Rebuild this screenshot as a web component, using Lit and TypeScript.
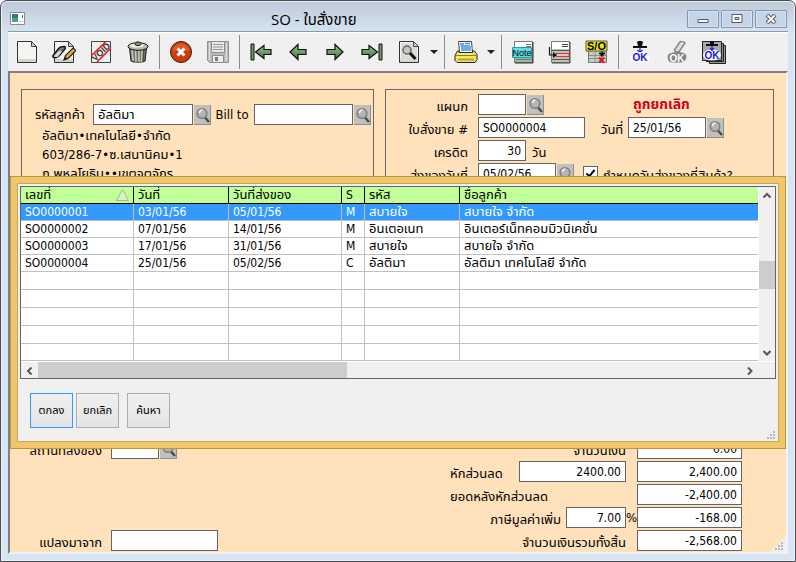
import { LitElement, html, svg, css, nothing, type TemplateResult } from "lit";
import { customElement, property, state } from "lit/decorators.js";
import { classMap } from "lit/directives/class-map.js";

const sheet = svg`<path d="M2.500 1.500h14l5 5v16h-19z" fill="#f4f4f0" stroke="#333"/><path d="M3 19h18v3H3z" fill="#d4d4cc"/><path d="M16.500 1.500v5h5z" fill="#d0d0c8" stroke="#444"/>`;

const arrowRight = svg`<path d="M4 9.500h8v-5l8 7.500-8 7.500v-5H4z" fill="url(#green)" stroke="#111" stroke-width="1.200"/>`;
const arrowLeft = svg`<path d="M20 9.500h-8v-5L4 12l8 7.500v-5h8z" fill="url(#green)" stroke="#111" stroke-width="1.200"/>`;
const green = svg`<defs><linearGradient id="green" x1="0" y1="0" x2="0" y2="1"><stop offset="0" stop-color="#a9cba0"/><stop offset="0.500" stop-color="#6c9a69"/><stop offset="1" stop-color="#4a744a"/></linearGradient></defs>`;

const icons: Record<string, TemplateResult> = {
  new: sheet,
  edit: svg`${sheet}<path d="M1 15.500l6-7.500c1-1.300 2-1.500 5-1.500 1.500 0 1.800 1.500 1 2.500l-6 7c-1 1.500-5 2-5.500 1.500-.8-.4-1-1.200-.5-2z" fill="#777" stroke="#111" stroke-width="1.300"/><path d="M2 16l4.500-5c1.500-.5 3-.3 3.500.7l-4 4.800c-1 .8-3 1-4-.5z" fill="#d8d8d8"/><path d="M12 20l1.500-4.500L21 8l3 2.500-8 8z" fill="#e3ac2d" stroke="#222" stroke-width="1.200"/><path d="M11.500 20.500l2-4 2 2z" fill="#222"/>`,
  void: svg`<path d="M2.500 1.500h19v21h-19z" fill="#f0f0ee" stroke="#444"/><path d="M2.500 15.500L17 1.500M8 22L21.500 8.500" stroke="#f01820" stroke-width="1.600"/><text class="void-text" x="0" y="3" text-anchor="middle" transform="translate(12 12) rotate(-44)">VOID</text>`,
  trash: svg`<path d="M3.500 8h17l-1.500 13c-.5 1.500-13.500 1.500-14 0z" fill="#77786a" stroke="#191919"/><path d="M6 9l1 12M9.500 10l.5 12M13 10v12M16 10l-.5 12" stroke="#c8c9ba" stroke-width="1.500"/><path d="M18 9l-1 12" stroke="#44453d"/><ellipse cx="12" cy="6.500" rx="10" ry="3.800" fill="#b9baad" stroke="#191919"/><ellipse cx="11" cy="5.500" rx="7" ry="2" fill="#eeeee6"/><path d="M9 4.500c0-3.500 6-3.500 6 0-1 1.500-5 1.500-6 0z" fill="#8b8c80" stroke="#191919"/>`,
  cancel: svg`<circle cx="12" cy="12" r="10.500" fill="#cf3c0c" stroke="#3a1a12"/><path d="M3.500 12a8.500 8.500 0 0 1 17 0c-4-3-13-3-17 0z" fill="#dc5a28"/><path d="M8.500 8.500l7 7M15.500 8.500l-7 7" stroke="#fff" stroke-width="3"/>`,
  save: svg`<path d="M1.500 1.500h21v21h-19l-2-2z" fill="#bcbcbc" stroke="#919191"/><path d="M5.500 1.500h13v11h-13z" fill="#e8e8e8" stroke="#8c8c8c"/><path d="M7 4.500h10M7 7h10M7 9.500h10" stroke="#999"/><path d="M6.500 15.500h11v7h-11z" fill="#ececec" stroke="#8c8c8c"/><path d="M9 17h3v4H9z" fill="#7c7c7c"/><path d="M3.500 3v17M20.500 3v18" stroke="#dedede"/>`,
  first: svg`${green}<path d="M2 4h3v16H2z" fill="#6f9d6b" stroke="#111"/><path d="M22 9.500h-7v-4L6.500 12l8.500 6.500v-4h7z" fill="url(#green)" stroke="#111" stroke-width="1.200"/>`,
  previous: svg`${green}${arrowLeft}`,
  next: svg`${green}${arrowRight}`,
  last: svg`${green}<path d="M19 4h3v16h-3z" fill="#6f9d6b" stroke="#111"/><path d="M2 9.500h7v-4l8.500 6.500L9 18.500v-4H2z" fill="url(#green)" stroke="#111" stroke-width="1.200"/>`,
  find: svg`${sheet}<path d="M4 3h12v4h4v14H4z" fill="#dcdcd6"/><circle cx="10" cy="10" r="4" fill="#c6c8c2" stroke="#666" stroke-width="1.500"/><path d="M13 13l5.500 6" stroke="#111" stroke-width="3"/>`,
  print: svg`<path d="M4.500 1.500h13l1 11h-13z" fill="#fff" stroke="#444"/><path d="M6 4h4M11 3.500h5M6.500 6h10M7 8h10M7 10h10" stroke="#3d93e0" stroke-width="1.500"/><path d="M3.500 11L1 15.500v5l2 2h18l2-3v-5L20.500 11h-2v1.500H5V11z" fill="#f1e36b" stroke="#222"/><path d="M1.500 15.500h21" stroke="#8c7f22"/><path d="M5 13.500h14" stroke="#fffbc8" stroke-dasharray="1 1"/><path d="M4 19.500h16" stroke="#b5a52d" stroke-width="2"/>`,
  note: svg`<path d="M3.500 1.500h18v21h-18z" fill="#fff" stroke="#777"/><path d="M4 12h17v10H4z" fill="#a4b5a4"/><path d="M22 2v21H4" fill="none" stroke="#333"/><path d="M15 4.500h5M15 6.500h5M5 19.500h16" stroke="#777"/><path d="M1.500 7.500h19v10h-19z" fill="#62dce0" stroke="#2a9aa0"/><text class="note-text" x="11" y="16" text-anchor="middle">Note</text>`,
  insert: svg`<path d="M3.500 1.500h18v21h-18z" fill="#fff" stroke="#777"/><path d="M4 9h17v13H4z" fill="#b8c3b6"/><path d="M22 2v21H4M14 4.500h6M14 6.500h6" fill="none" stroke="#444"/><path d="M4 10.500h17M4 19.500h17" stroke="#356a44"/><path d="M8 13.500h13v3H8z" fill="#e9c0c8" stroke="#e03040"/><path d="M1.500 7v8H6" fill="none" stroke="#111" stroke-width="1.200"/><path d="M5 12l4 3-4 3z" fill="#111"/>`,
  salesOrder: svg`<path d="M3.500 10.500h18v12h-18z" fill="#c5cbc5" stroke="#777"/><path d="M4 15.500h17M4 18.500h17M10 12v10M16 12v10" stroke="#8a918a"/><path d="M1 1h21v10H1z" fill="#f5e800" stroke="#555"/><text class="so-text" x="11.500" y="10" text-anchor="middle">S/O</text><path d="M17 11v3M14 13h6l-3 3.500z" stroke="#111" fill="#111"/><path d="M14 17.500l5 5M19 17.500l-5 5" stroke="#e80f16" stroke-width="2"/>`,
  approve: svg`<path d="M9 2c0-1.500 6-1.500 6 0l-1 4h5v2H5V6h5z" fill="#111"/><path d="M12 8v5M9.500 10l2.500 2.500L14.500 10" stroke="#1b1be0" stroke-width="1.200" fill="none"/><ellipse cx="12" cy="17.500" rx="10" ry="5.500" fill="#fff"/><text class="ok-text" x="12" y="21" text-anchor="middle">OK</text>`,
  unapprove: svg`<path d="M9.500 10l5-7.500c1-1.500 4.500-1 5.500.5l-5.500 8c-1 1.500-5 1-5-1z" fill="#dedede" stroke="#888" stroke-width="1.500"/><path d="M3 15c2-3.500 16-4.500 18 0 1.500 4-2 7.500-5 7.500H7c-4 0-5-4.500-4-7.500z" fill="#858585"/><text class="ok-text ok-gray" x="12" y="22" text-anchor="middle">OK</text>`,
  approveAll: svg`<path d="M7.500 5.500h16v18h-16z" fill="#999" stroke="#222"/><path d="M4.500 3.500h17v18h-17z" fill="#888" stroke="#222"/><path d="M.5 1.500h19v19H.5z" fill="#a8a8a8" stroke="#222"/><ellipse cx="10" cy="15" rx="9" ry="5.500" fill="#fff"/><path d="M8 1h4v3h4v2H4V4h4z" fill="#111"/><path d="M10 6v4M8 8l2 2.500L12 8" stroke="#1b1be0" stroke-width="1.200" fill="none"/><text class="ok-text" x="10" y="19" text-anchor="middle">OK</text>`,
};

type ToolItem = { icon: string; label: string; menu?: boolean };

const toolGroups: ToolItem[][] = [
  [
    { icon: "new", label: "New" },
    { icon: "edit", label: "Edit" },
    { icon: "void", label: "Void" },
    { icon: "trash", label: "Delete" },
  ],
  [
    { icon: "cancel", label: "Cancel" },
    { icon: "save", label: "Save" },
  ],
  [
    { icon: "first", label: "First record" },
    { icon: "previous", label: "Previous record" },
    { icon: "next", label: "Next record" },
    { icon: "last", label: "Last record" },
    { icon: "find", label: "Find", menu: true },
  ],
  [{ icon: "print", label: "Print", menu: true }],
  [
    { icon: "note", label: "Note" },
    { icon: "insert", label: "Insert line" },
    { icon: "salesOrder", label: "Close sales order" },
  ],
  [
    { icon: "approve", label: "Approve" },
    { icon: "unapprove", label: "Remove approval" },
    { icon: "approveAll", label: "Approve all" },
  ],
];

@customElement("so-toolbar")
export class SoToolbar extends LitElement {
  static styles = css`
    :host {
      display: flex;
      align-items: center;
      height: 38px;
      background: #f0f0f0;
      border-top: 1px solid #fff;
    }
    button {
      display: flex;
      align-items: center;
      justify-content: center;
      width: 37px;
      height: 34px;
      padding: 0;
      border: 0;
      background: none;
    }
    button.menu {
      width: 14px;
    }
    .separator {
      width: 1px;
      height: 34px;
      margin: 0 2px 0 3px;
      background: #8c8c8c;
    }
    .void-text,
    .note-text,
    .so-text,
    .ok-text {
      font-family: "Liberation Sans", sans-serif;
    }
    .void-text,
    .so-text,
    .ok-text {
      font-weight: bold;
    }
    .void-text,
    .note-text {
      font-size: 9px;
    }
    .void-text {
      fill: #333;
    }
    .so-text {
      font-size: 11px;
    }
    .ok-text {
      font-size: 10px;
      fill: #1414f0;
    }
    .ok-text.ok-gray {
      fill: #fff;
    }
  `;

  render() {
    return toolGroups.map(
      (group, i) => html`
        ${i > 0 ? html`<span class="separator"></span>` : nothing}
        ${group.map(
          (item) => html`
            <button aria-label=${item.label}>
              <svg width="24" height="24" viewBox="0 0 24 24">${icons[item.icon]}</svg>
            </button>
            ${item.menu
              ? html`<button class="menu" aria-label="${item.label} options">
                  <svg width="8" height="4" viewBox="0 0 8 4"><path d="M0 0h8L4 4z" fill="#222" /></svg>
                </button>`
              : nothing}
          `,
        )}
      `,
    );
  }
}

@customElement("lookup-button")
export class LookupButton extends LitElement {
  @property() label = "";

  static styles = css`
    :host {
      display: block;
      flex: none;
      margin-left: 1px;
    }
    button {
      display: block;
      width: 17px;
      height: 20px;
      padding: 0;
      border: 0;
      border-right: 1px solid #8f8f8f;
      border-bottom: 1px solid #8f8f8f;
      background: #c0c0c0;
    }
    svg {
      display: block;
    }
  `;

  render() {
    return html`<button aria-label=${this.label}>
      <svg width="16" height="19" viewBox="0 0 16 19">
        <path d="M10.500 12l4.500 5" stroke="#4a4a4a" stroke-width="2.500" />
        <circle cx="8" cy="8.500" r="4.800" fill="#b4b4b4" stroke="#808080" stroke-width="1.600" />
        <path d="M5.500 8c0-2 1-3 3-3" stroke="#f4f4f4" stroke-width="1.500" fill="none" />
      </svg>
    </button>`;
  }
}

type OrderRow = { no: string; date: string; due: string; status: string; code: string; name: string };

const orders: OrderRow[] = [
  { no: "SO0000001", date: "03/01/56", due: "05/01/56", status: "M", code: "สบายใจ", name: "สบายใจ จำกัด" },
  { no: "SO0000002", date: "07/01/56", due: "14/01/56", status: "M", code: "อินเตอเนท", name: "อินเตอร์เน็ทคอมมิวนิเคชั่น" },
  { no: "SO0000003", date: "17/01/56", due: "31/01/56", status: "M", code: "สบายใจ", name: "สบายใจ จำกัด" },
  { no: "SO0000004", date: "25/01/56", due: "05/02/56", status: "C", code: "อัลติมา", name: "อัลติมา เทคโนโลยี จำกัด" },
];

@customElement("order-picker")
export class OrderPicker extends LitElement {
  @state() private selected = 0;

  static styles = css`
    :host {
      display: block;
      box-sizing: border-box;
      padding: 6px;
      border: 1px solid #b9974a;
      background: #f0c869;
    }
    .body {
      position: relative;
      padding: 2px 2px 13px;
      border: 1px solid #c9a65a;
      background: #f0f0f0;
    }
    .list {
      display: grid;
      grid-template-columns: 1fr 17px;
      border: 1px solid #646464;
      background: #fff;
    }
    table {
      width: 100%;
      table-layout: fixed;
      border-collapse: separate;
      border-spacing: 0;
      font-size: 13px;
      line-height: 16px;
    }
    .latin {
      font-size: 12px;
    }
    .col-no,
    .col-due {
      width: 113px;
    }
    .col-date,
    .col-code {
      width: 95px;
    }
    .col-status {
      width: 23px;
    }
    th,
    td {
      box-sizing: border-box;
      height: 17px;
      padding: 0 0 0 4px;
      border-right: 1px solid #c0c0c0;
      border-bottom: 1px solid #c0c0c0;
      text-align: left;
      font-weight: normal;
      white-space: nowrap;
      overflow: hidden;
    }
    th {
      border-color: #000;
      background: #c1ff98;
    }
    th:last-child,
    td:last-child {
      border-right: 0;
    }
    .head {
      display: flex;
      justify-content: space-between;
      align-items: center;
      height: 16px;
      padding-right: 4px;
    }
    .blank td {
      height: 18px;
    }
    .blank:last-child td {
      height: 17px;
    }
    .selected td {
      background: #3399ff;
      color: #fff;
    }
    .vbar,
    .hbar {
      display: flex;
      background: #f0f0f0;
    }
    .vbar {
      flex-direction: column;
      border-left: 1px solid #fff;
    }
    .hbar {
      grid-column: 1 / -1;
      height: 16px;
      padding-right: 17px;
      border-top: 1px solid #fff;
    }
    .track {
      display: flex;
      flex: 1;
    }
    .vbar .track {
      flex-direction: column;
    }
    .before {
      flex: 56;
    }
    .after {
      flex: 54;
    }
    .vbar .thumb {
      flex: 28;
    }
    .hbar .thumb {
      width: 44%;
    }
    .thumb {
      background: #cdcdcd;
    }
    .arrow {
      display: flex;
      align-items: center;
      justify-content: center;
      width: 17px;
      height: 17px;
      padding: 0;
      border: 0;
      background: none;
    }
    .vbar .arrow {
      width: 16px;
    }
    .actions {
      display: flex;
      gap: 3px;
      padding: 14px 0 0 10px;
    }
    .action {
      box-sizing: border-box;
      width: 43px;
      height: 35px;
      padding: 0;
      border: 1px solid #adadad;
      background: linear-gradient(#f0f0f0, #e4e4e4);
      color: #000;
      font-family: inherit;
      font-size: 11px;
      white-space: nowrap;
    }
    .action.default {
      border-color: #3399ff;
    }
    .action.search {
      margin-left: 5px;
    }
    .grip {
      position: absolute;
      right: 3px;
      bottom: 2px;
    }
  `;

  private arrow(label: string, path: string) {
    return html`<button class="arrow" aria-label=${label}>
      <svg width="8" height="8" viewBox="0 0 8 8"><path d=${path} fill="none" stroke="#555" stroke-width="2" /></svg>
    </button>`;
  }

  render() {
    return html`
      <div class="body" role="dialog" aria-label="ค้นหาใบสั่งขาย">
        <div class="list">
          <table>
            <colgroup>
              <col class="col-no" />
              <col class="col-date" />
              <col class="col-due" />
              <col class="col-status" />
              <col class="col-code" />
              <col />
            </colgroup>
            <thead>
              <tr>
                <th>
                  <span class="head">
                    เลขที่
                    <svg width="13" height="12" viewBox="0 0 13 12">
                      <path d="M.5 11.500L6.500.5l6 11z" fill="#d5f7bd" stroke="#a3b896" />
                    </svg>
                  </span>
                </th>
                <th>วันที่</th>
                <th>วันที่ส่งของ</th>
                <th class="latin">S</th>
                <th>รหัส</th>
                <th>ชื่อลูกค้า</th>
              </tr>
            </thead>
            <tbody>
              ${orders.map(
                (o, i) => html`<tr
                  class=${classMap({ selected: i === this.selected })}
                  @click=${() => (this.selected = i)}
                >
                  <td class="latin">${o.no}</td>
                  <td class="latin">${o.date}</td>
                  <td class="latin">${o.due}</td>
                  <td class="latin">${o.status}</td>
                  <td>${o.code}</td>
                  <td>${o.name}</td>
                </tr>`,
              )}
              ${Array.from(
                { length: 5 },
                () => html`<tr class="blank"><td></td><td></td><td></td><td></td><td></td><td></td></tr>`,
              )}
            </tbody>
          </table>
          <div class="vbar">
            ${this.arrow("Scroll up", "M.5 5.500L4 2l3.500 3.500")}
            <div class="track">
              <div class="before"></div>
              <div class="thumb"></div>
              <div class="after"></div>
            </div>
            ${this.arrow("Scroll down", "M.5 2L4 5.500 7.500 2")}
          </div>
          <div class="hbar">
            ${this.arrow("Scroll left", "M5.500.5L2 4l3.500 3.500")}
            <div class="track"><div class="thumb"></div></div>
            ${this.arrow("Scroll right", "M2 .5L5.500 4 2 7.500")}
          </div>
        </div>
        <div class="actions">
          <button class="action default">ตกลง</button>
          <button class="action">ยกเลิก</button>
          <button class="action search">ค้นหา</button>
        </div>
        <svg class="grip" width="8" height="8" viewBox="0 0 8 8">
          <path d="M6 0h2v2H6zM3 3h2v2H3zM6 3h2v2H6zM0 6h2v2H0zM3 6h2v2H3zM6 6h2v2H6z" fill="#b8b8b8" />
        </svg>
      </div>
    `;
  }
}

@customElement("app-root")
export class AppRoot extends LitElement {
  static styles = css`
    :host {
      display: flex;
      flex-direction: column;
      box-sizing: border-box;
      min-height: 100vh;
      padding: 0 7px 7px;
      border: 1px solid #4b4b50;
      border-radius: 7px 7px 0 0;
      background: linear-gradient(#bccad9, #d7e4f2 32px);
      box-shadow: inset 0 0 0 1px #e9f1f9;
      color: #000;
      font-family: "DejaVu Sans Condensed", "Noto Sans Thai", "Noto Sans", sans-serif;
      font-size: 13px;
      line-height: 19px;
    }
    .titlebar {
      display: flex;
      align-items: center;
      gap: 2px;
      height: 30px;
      padding: 5px 1px 0 2px;
      box-sizing: border-box;
    }
    h1 {
      flex: 1;
      margin: 0 0 0 244px;
      font: 15px / 20px "Open Sans", "Noto Sans Thai", sans-serif;
    }
    .caption {
      display: flex;
      align-items: center;
      justify-content: center;
      width: 32px;
      height: 18px;
      padding: 0;
      border: 1px solid #8495b3;
      border-radius: 1px;
      background: #c6d5e6;
      box-shadow: inset 0 0 0 1px #d7e3ef;
      box-sizing: border-box;
    }
    .client {
      display: flex;
      flex: 1;
      flex-direction: column;
      border-top: 1px solid #8d99a6;
    }
    .form {
      position: relative;
      display: flex;
      flex: 1;
      flex-direction: column;
      justify-content: space-between;
      padding: 16px 12px 1px 11px;
      border: 2px solid;
      border-color: #808080 #f2f2f2 #f2f2f2 #808080;
      background: #ffe1bb;
    }
    .panels {
      display: grid;
      grid-template-columns: 353fr 389fr;
      gap: 11px;
    }
    .panel {
      box-sizing: border-box;
      height: 130px;
      border: 1px solid #696969;
    }
    .customer {
      padding: 14px 2px 0 13px;
    }
    .document {
      display: grid;
      align-content: start;
      grid-auto-rows: 21px;
      gap: 2px;
      padding: 4px 0 0;
    }
    .row {
      display: flex;
      align-items: center;
    }
    .document label,
    .days,
    .summary label {
      padding-top: 4px;
    }
    .code-label {
      flex: none;
      width: 58px;
    }
    .bill-label {
      flex: none;
      width: 43px;
      text-align: center;
    }
    .address {
      margin: 1px 0 0 7px;
      white-space: pre-line;
    }
    .doc-label {
      flex: none;
      width: 82px;
      margin-right: 10px;
      text-align: right;
    }
    label,
    .status {
      white-space: nowrap;
    }
    .date-label {
      width: 27px;
      margin-left: 16px;
    }
    .days {
      margin-left: 6px;
    }
    input.field {
      box-sizing: border-box;
      width: 107px;
      height: 21px;
      min-width: 0;
      margin: 0;
      padding: 0 4px;
      border: 1px solid #646464;
      border-radius: 0;
      background: #fff;
      color: #000;
      font: inherit;
      font-size: 12px;
    }
    input.short {
      width: 48px;
    }
    input.date {
      width: 78px;
    }
    input.rate {
      width: 60px;
    }
    input.grow {
      flex: 1;
      width: 0;
      font-size: 13px;
    }
    input.number {
      text-align: right;
    }
    .status {
      margin-left: 89px;
      color: #d0021b;
      font-size: 14px;
      font-weight: bold;
    }
    .check {
      appearance: none;
      width: 15px;
      height: 15px;
      margin: 0 5px 0 9px;
      border: 1px solid #646464;
      background: #fff;
    }
    .check:checked::before {
      content: "";
      display: block;
      width: 3px;
      height: 7px;
      margin: 1px 0 0 4px;
      border: solid #000;
      border-width: 0 2px 2px 0;
      transform: rotate(40deg);
    }
    .picker {
      position: absolute;
      top: 103px;
      left: 0;
      right: 0;
    }
    .summary {
      display: flex;
      justify-content: space-between;
      margin-right: 32px;
    }
    .origin,
    .totals {
      display: grid;
      grid-template-rows: repeat(5, 21px);
      row-gap: 2px;
    }
    .origin .last {
      grid-row: 5;
    }
    .origin label {
      width: 81px;
      margin-right: 9px;
      text-align: right;
    }
    .totals {
      grid-template-columns: 176px 105px;
      column-gap: 11px;
    }
    .totals .total {
      width: 105px;
    }
    .end {
      justify-content: flex-end;
    }
    .between {
      justify-content: space-between;
    }
    .end .rate {
      margin-left: 5px;
    }
    .percent {
      width: 0;
    }
    .grip {
      position: absolute;
      right: 0;
      bottom: 0;
    }
  `;

  private text(id: string, value: string, kind = "") {
    return html`<input id=${id} class="field ${kind}" type="text" .value=${value} />`;
  }

  render() {
    return html`
      <header class="titlebar">
        <svg width="15" height="13" viewBox="0 0 15 13">
          <path d="M.5.5h14v12H.5z" fill="#fff" stroke="#8b8b8b" />
          <path d="M2 2h6v8H2z" fill="#2c7d86" />
          <path d="M2 6h6v4H2z" fill="#4fa27c" />
          <path d="M12 3h1v3h-1z" fill="#2f6fd0" />
          <path d="M9 9h4v1H9z" fill="#ccc" />
        </svg>
        <h1>SO - ใบสั่งขาย</h1>
        <button class="caption" aria-label="Minimize">
          <svg width="12" height="10" viewBox="0 0 12 10"><path d="M1 5.500h10v3H1z" fill="#fff" stroke="#555a66" /></svg>
        </button>
        <button class="caption" aria-label="Maximize">
          <svg width="12" height="10" viewBox="0 0 12 10">
            <path d="M1 .5h10v8H1z" fill="#fff" stroke="#555a66" />
            <path d="M4 3.500h4v2H4z" fill="#c6d5e6" stroke="#555a66" />
          </svg>
        </button>
        <button class="caption" aria-label="Close">
          <svg width="12" height="10" viewBox="0 0 12 10">
            <path d="M2 1l8 8M10 1L2 9" stroke="#555a66" stroke-width="4" />
            <path d="M2.500 1.500l7 7M9.500 1.500l-7 7" stroke="#fff" stroke-width="2" />
          </svg>
        </button>
      </header>
      <main class="client">
        <so-toolbar></so-toolbar>
        <div class="form">
          <div class="panels">
            <section class="panel customer">
              <div class="row">
                <label class="code-label" for="customer">รหัสลูกค้า</label>
                ${this.text("customer", "อัลติมา", "grow")}
                <lookup-button label="Find customer"></lookup-button>
                <label class="bill-label" for="billto">Bill to</label>
                ${this.text("billto", "", "grow")}
                <lookup-button label="Find bill-to customer"></lookup-button>
              </div>
              <div class="address">${"อัลติมา•เทคโนโลยี•จำกัด\n603/286-7•ซ.เสนานิคม•1\nถ.พหลโยธิน••เขตจตุจักร"}</div>
            </section>
            <section class="panel document">
              <div class="row">
                <label class="doc-label" for="dept">แผนก</label>
                ${this.text("dept", "", "short")}
                <lookup-button label="Find department"></lookup-button>
                <strong class="status">ถูกยกเลิก</strong>
              </div>
              <div class="row">
                <label class="doc-label" for="order">ใบสั่งขาย #</label>
                ${this.text("order", "SO0000004")}
                <label class="date-label" for="date">วันที่</label>
                ${this.text("date", "25/01/56", "date")}
                <lookup-button label="Pick date"></lookup-button>
              </div>
              <div class="row">
                <label class="doc-label" for="credit">เครดิต</label>
                ${this.text("credit", "30", "short number")}
                <span class="days">วัน</span>
              </div>
              <div class="row">
                <label class="doc-label" for="due">ส่งของวันที่</label>
                ${this.text("due", "05/02/56", "date")}
                <lookup-button label="Pick delivery date"></lookup-button>
                <input id="per-item" class="check" type="checkbox" checked />
                <label for="per-item">กำหนดวันส่งของที่สินค้า?</label>
              </div>
            </section>
          </div>
          <div class="summary">
            <div class="origin">
              <div class="row">
                <label for="place">สถานที่ส่งของ</label>
                ${this.text("place", "", "short")}
                <lookup-button label="Find delivery place"></lookup-button>
              </div>
              <div class="row last">
                <label for="source">แปลงมาจาก</label>
                ${this.text("source", "")}
              </div>
            </div>
            <div class="totals">
              <div class="row end"><label for="amount">จำนวนเงิน</label></div>
              ${this.text("amount", "0.00", "number total")}
              <div class="row between">
                <label for="discount">หักส่วนลด</label>
                ${this.text("discount", "2400.00", "number")}
              </div>
              ${this.text("discount-total", "2,400.00", "number total")}
              <div class="row"><label for="net">ยอดหลังหักส่วนลด</label></div>
              ${this.text("net", "-2,400.00", "number total")}
              <div class="row end">
                <label for="vat">ภาษีมูลค่าเพิ่ม</label>
                ${this.text("vat", "7.00", "number rate")}
                <span class="percent">%</span>
              </div>
              ${this.text("vat-total", "-168.00", "number total")}
              <div class="row end"><label for="grand">จำนวนเงินรวมทั้งสิ้น</label></div>
              ${this.text("grand", "-2,568.00", "number total")}
            </div>
          </div>
          <order-picker class="picker"></order-picker>
          <svg class="grip" width="16" height="16" viewBox="0 0 16 16">
            <path d="M16 0v16H0z" fill="#f0f0f0" />
            <path
              d="M11 6h2v2h-2zM8 9h2v2H8zM11 9h2v2h-2zM5 12h2v2H5zM8 12h2v2H8zM11 12h2v2h-2z"
              fill="#b8b8b8"
            />
          </svg>
        </div>
      </main>
    `;
  }
}
